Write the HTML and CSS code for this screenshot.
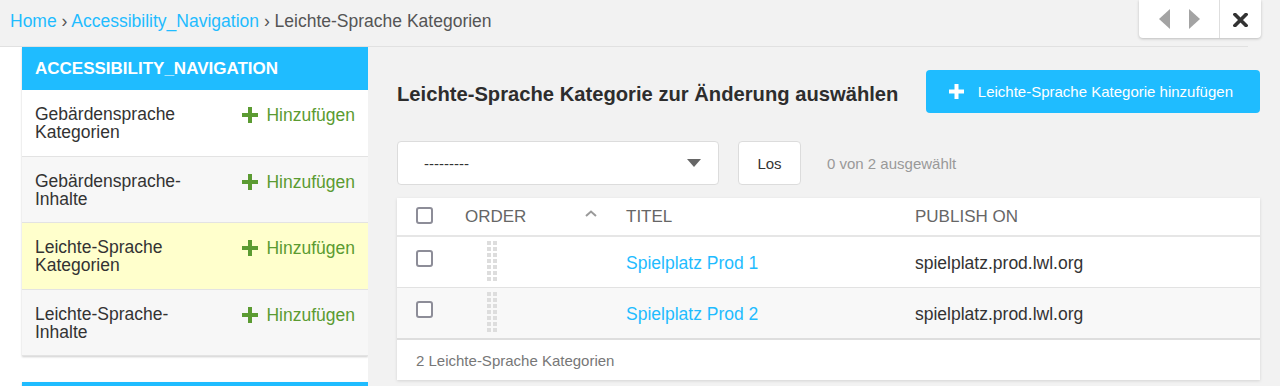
FILE: index.html
```html
<!DOCTYPE html>
<html lang="de">
<head>
<meta charset="utf-8">
<title>Leichte-Sprache Kategorien</title>
<link rel="stylesheet" href="styles.css">
</head>
<body>
<header class="topbar">
  <nav class="breadcrumbs">
    <a href="#" class="crumb-link">Home</a> <span class="sep">›</span> <a href="#" class="crumb-link">Accessibility_Navigation</a> <span class="sep">›</span> <span class="crumb-current">Leichte-Sprache Kategorien</span>
  </nav>
</header>

<div class="toolbar">
  <div class="toolbar-nav">
    <svg class="tri" width="11" height="20" viewBox="0 0 11 20"><polygon points="11,0 11,20 0,10" fill="#a3a3a3"/></svg>
    <svg class="tri" width="11" height="20" viewBox="0 0 11 20"><polygon points="0,0 0,20 11,10" fill="#a3a3a3"/></svg>
  </div>
  <div class="toolbar-close">
    <svg width="15" height="14" viewBox="0 0 15 14"><path d="M2 1.5L13 12.5M13 1.5L2 12.5" stroke="#333" stroke-width="3.6" stroke-linecap="square"/></svg>
  </div>
</div>

<div class="layout">
  <aside class="sidebar">
    <div class="module">
      <div class="module-head">ACCESSIBILITY_NAVIGATION</div>
      <div class="module-row">
        <span class="model-name">Gebärdensprache<br>Kategorien</span>
        <a href="#" class="add-link"><svg width="16" height="16" viewBox="0 0 16 16"><path d="M6 0h4v6h6v4h-6v6h-4v-6h-6v-4h6z" fill="currentColor"/></svg>Hinzufügen</a>
      </div>
      <div class="module-row row-alt">
        <span class="model-name">Gebärdensprache-<br>Inhalte</span>
        <a href="#" class="add-link"><svg width="16" height="16" viewBox="0 0 16 16"><path d="M6 0h4v6h6v4h-6v6h-4v-6h-6v-4h6z" fill="currentColor"/></svg>Hinzufügen</a>
      </div>
      <div class="module-row row-current">
        <span class="model-name">Leichte-Sprache<br>Kategorien</span>
        <a href="#" class="add-link"><svg width="16" height="16" viewBox="0 0 16 16"><path d="M6 0h4v6h6v4h-6v6h-4v-6h-6v-4h6z" fill="currentColor"/></svg>Hinzufügen</a>
      </div>
      <div class="module-row row-alt">
        <span class="model-name">Leichte-Sprache-<br>Inhalte</span>
        <a href="#" class="add-link"><svg width="16" height="16" viewBox="0 0 16 16"><path d="M6 0h4v6h6v4h-6v6h-4v-6h-6v-4h6z" fill="currentColor"/></svg>Hinzufügen</a>
      </div>
    </div>
    <div class="module module-next">
      <div class="module-head"></div>
    </div>
  </aside>

  <main class="content">
    <div class="title-row">
      <h1 class="page-title">Leichte-Sprache Kategorie zur Änderung auswählen</h1>
      <a href="#" class="add-button"><svg width="15" height="15" viewBox="0 0 15 15"><path d="M5.5 0h4v5.5h5.5v4h-5.5v5.5h-4v-5.5h-5.5v-4h5.5z" fill="#fff"/></svg>Leichte-Sprache Kategorie hinzufügen</a>
    </div>

    <div class="actions">
      <div class="select">
        <span class="select-value">---------</span>
        <svg width="14" height="8" viewBox="0 0 14 8"><polygon points="0,0 14,0 7,8" fill="#666"/></svg>
      </div>
      <button class="go-button">Los</button>
      <span class="counter">0 von 2 ausgewählt</span>
    </div>

    <div class="table">
      <div class="trow thead">
        <div class="cell cell-check"><span class="checkbox"></span></div>
        <div class="cell cell-order">ORDER<svg class="sort-caret" width="12" height="7" viewBox="0 0 12 7"><path d="M1 6L6 1.5L11 6" fill="none" stroke="#9a9a9a" stroke-width="2"/></svg></div>
        <div class="cell">TITEL</div>
        <div class="cell">PUBLISH ON</div>
      </div>
      <div class="trow tbody-row">
        <div class="cell cell-check"><span class="checkbox"></span></div>
        <div class="cell cell-order"><span class="drag-handle"></span></div>
        <div class="cell"><a href="#" class="title-link">Spielplatz Prod 1</a></div>
        <div class="cell">spielplatz.prod.lwl.org</div>
      </div>
      <div class="trow tbody-row row-alt last-row">
        <div class="cell cell-check"><span class="checkbox"></span></div>
        <div class="cell cell-order"><span class="drag-handle"></span></div>
        <div class="cell"><a href="#" class="title-link">Spielplatz Prod 2</a></div>
        <div class="cell">spielplatz.prod.lwl.org</div>
      </div>
      <div class="tfoot">2 Leichte-Sprache Kategorien</div>
    </div>
  </main>
</div>
</body>
</html>
```

FILE: styles.css
```css
* {
  box-sizing: border-box;
}

html, body {
  margin: 0;
  padding: 0;
}

html {
  overflow: hidden;
}

body {
  background: #f2f2f2;
  font-family: "Liberation Sans", Arial, sans-serif;
  color: #333;
  height: 386px;
  overflow: hidden;
  position: relative;
}

a {
  text-decoration: none;
}

/* top bar */
.topbar {
  height: 47px;
  margin-right: 32px;
  padding: 11px 0 0 10px;
  border-bottom: 1px solid #e1e1e1;
}

.breadcrumbs {
  font-size: 17.5px;
  line-height: 20px;
  color: #555;
}

.crumb-link {
  color: #1fbcff;
}

.sep {
  color: #555;
}

.crumb-current {
  color: #555;
}

/* top-right toolbar */
.toolbar {
  position: absolute;
  top: 0;
  right: 19px;
  width: 122px;
  height: 38px;
  background: #fff;
  border-radius: 0 0 4px 4px;
  box-shadow: 0 1px 3px rgba(0, 0, 0, 0.22);
  display: flex;
}

.toolbar-nav {
  width: 81px;
  border-right: 1px solid #dedede;
  display: flex;
  align-items: center;
  padding-left: 20px;
  gap: 19px;
}

.toolbar-close {
  flex: 1;
  display: flex;
  align-items: center;
  justify-content: center;
  padding-top: 1px;
}

/* layout */
.layout {
  display: flex;
  height: 339px;
  overflow: hidden;
}

.sidebar {
  width: 368px;
  flex: none;
  background: #fff;
  padding-left: 22px;
  overflow: hidden;
}

.module {
  background: #fff;
  box-shadow: 0 1px 2px rgba(0, 0, 0, 0.2);
}

.module-next {
  margin-top: 26px;
}

.module-head {
  height: 43px;
  background: #1fbcff;
  color: #fff;
  font-weight: bold;
  font-size: 17px;
  line-height: 43px;
  padding-left: 13px;
}

.module-row {
  display: flex;
  justify-content: space-between;
  align-items: flex-start;
  padding: 15px 13px 14.5px 13px;
  border-bottom: 1px solid #e3e3e3;
  font-size: 17.5px;
  line-height: 18px;
  background: #fff;
}

.module-row.row-alt {
  background: #f7f7f7;
}

.module-row.row-current {
  background: #ffffcc;
}

.model-name {
  color: #333;
}

.add-link {
  color: #5b9b32;
  display: flex;
  align-items: center;
  gap: 8px;
  padding-top: 1px;
}

.add-link svg {
  flex: none;
}

/* content */
.content {
  flex: 1;
  padding: 23px 20px 0 29px;
}

.title-row {
  display: flex;
  justify-content: space-between;
  align-items: flex-start;
  height: 43px;
}

.page-title {
  margin: 12px 0 0 0;
  font-size: 20.2px;
  line-height: 24px;
  font-weight: bold;
  color: #2d2d2d;
}

.add-button {
  height: 43px;
  background: #1fbcff;
  color: #fff;
  border-radius: 4px;
  display: flex;
  align-items: center;
  padding: 0 27px 0 23px;
  gap: 14px;
  font-size: 15px;
}

.actions {
  margin-top: 28px;
  height: 44px;
  display: flex;
  align-items: center;
}

.select {
  width: 322px;
  height: 44px;
  background: #fff;
  border: 1px solid #dcdcdc;
  border-radius: 4px;
  display: flex;
  align-items: center;
  justify-content: space-between;
  padding: 0 17px 0 26px;
  font-size: 15px;
  color: #333;
}

.go-button {
  margin-left: 19px;
  width: 63px;
  height: 44px;
  background: #fff;
  border: 1px solid #dcdcdc;
  border-radius: 4px;
  font-family: "Liberation Sans", Arial, sans-serif;
  font-size: 15px;
  color: #333;
  padding: 0;
}

.counter {
  margin-left: 26px;
  font-size: 15px;
  color: #999;
}

/* table */
.table {
  margin-top: 13px;
  background: #fff;
  box-shadow: 0 1px 3px rgba(0, 0, 0, 0.13);
}

.trow {
  display: grid;
  grid-template-columns: 68px 161px 289px 1fr;
}

.cell {
  display: flex;
  align-items: center;
  font-size: 17.5px;
  color: #333;
}

.thead {
  height: 39px;
  border-bottom: 2px solid #e6e6e6;
}

.thead .cell {
  font-size: 17px;
  color: #666;
  padding-top: 1px;
}

.cell-check {
  padding-left: 19px;
  align-items: flex-start;
}

.thead .cell-check {
  padding-top: 0;
}

.checkbox {
  width: 17px;
  height: 17px;
  border: 2px solid #8d8d98;
  border-radius: 3px;
  background: #fff;
  margin-top: 13px;
}

.thead .checkbox {
  margin-top: 9px;
}

.thead .cell-order {
  justify-content: space-between;
  padding-right: 29px;
}

.sort-caret {
  align-self: flex-start;
  margin-top: 11px;
}

.tbody-row {
  height: 51px;
  border-bottom: 1px solid #e2e2e2;
}

.tbody-row .cell {
  padding-top: 2px;
}

.tbody-row .cell-check,
.tbody-row .cell-order {
  padding-top: 0;
}

.tbody-row.row-alt {
  background: #f8f8f8;
}

.tbody-row.last-row {
  height: 52px;
  border-bottom: 2px solid #dedede;
}

.drag-handle {
  margin-left: 22px;
  width: 10px;
  height: 42px;
  background-image: conic-gradient(at 4px 4px, transparent 75%, #dddddd 0);
  background-size: 6px 6px;
}

.title-link {
  color: #1fbcff;
}

.tfoot {
  height: 40px;
  padding-left: 19px;
  display: flex;
  align-items: center;
  font-size: 15px;
  color: #777;
}
```
